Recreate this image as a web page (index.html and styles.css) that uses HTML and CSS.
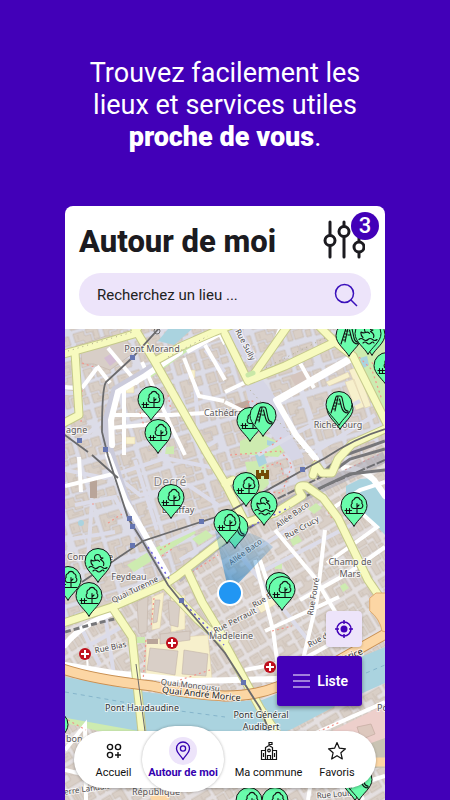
FILE: index.html
```html
<!DOCTYPE html>
<html lang="fr">
<head>
    <meta charset="UTF-8">
    <meta name="viewport" content="width=device-width, initial-scale=1.0">
    <title>Autour de moi</title>
    <link rel="stylesheet" href="styles.css">
</head>
<body>

    <p class="headline">Trouvez facilement les<br>lieux et services utiles<br><strong>proche de vous</strong>.</p>

    <main class="phone">
        <header class="top">
            <div class="title-row">
                <h1>Autour de moi</h1>
                <button type="button" class="filters" aria-label="Filtres, 3 actifs">
                    <svg width="42" height="40" viewBox="0 0 42 40" fill="none" stroke="#1c1b20" stroke-width="3" stroke-linecap="round">
                        <path d="M7 2v13M7 26v11M21 2v4M21 17v20M36 18v3M36 33v4"/>
                        <circle cx="7" cy="20.500" r="5"/>
                        <circle cx="21" cy="11.500" r="5"/>
                        <circle cx="36" cy="27" r="5"/>
                    </svg>
                    <span class="badge">3</span>
                </button>
            </div>
            <form class="search">
                <input type="text" id="lieu" aria-label="Recherchez un lieu" placeholder="Recherchez un lieu ...">
                <button type="submit" aria-label="Rechercher">
                    <svg width="24" height="24" viewBox="0 0 24 24" fill="none" stroke="#3a10bb" stroke-width="1.500">
                        <circle cx="10.500" cy="10.500" r="9"/>
                        <path d="M17 17l6 6"/>
                    </svg>
                </button>
            </form>
        </header>

        <section class="map">
            <svg class="map-canvas" viewBox="65 329 320 471" preserveAspectRatio="xMidYMin slice" role="img" aria-label="Carte">
                <defs>
                    <pattern id="blocks" width="58" height="52" patternUnits="userSpaceOnUse" patternTransform="rotate(-17)">
                        <rect width="58" height="52" fill="#dcdce7"/>
                        <g fill="#d9cfc7" stroke="#c2b3a8" stroke-width=".6">
                            <path d="M2 2h8v5h7v8H9v4H2zM11 2h13v9h-6V6h-7zM2 21h9v-4h8v8H2z"/>
                            <path d="M29 2h9v10h-9zM40 2h14v6h-5v6h-9zM29 14h9v11h-9zM41 16h5v-5h9v14H41z"/>
                            <path d="M2 30h12v6H7v11H2zM16 30h9v9h-7v8h-9v-9h7zM21 41h5v7h-5z"/>
                            <path d="M30 29h11v5h6v8h-8v-4h-9zM43 28h12v12h-6v-8h-6zM30 40h7v4h9v5H30zM48 43h7v6h-7z"/>
                        </g>
                        <path d="M5 7v8M13 12h5M32 5v4M46 5h5M34 18v4M45 20h7M5 33h5M19 33h3M34 31v5M50 31v6M34 46h8M20 17v6" fill="none" stroke="#c9bcb2" stroke-width=".8"/>
                    </pattern>
                    <pattern id="blocks-south" width="50" height="46" patternUnits="userSpaceOnUse" patternTransform="rotate(-31)">
                        <rect width="50" height="46" fill="#e4dfe0"/>
                        <g fill="#d9cfc7" stroke="#c2b3a8" stroke-width=".6">
                            <path d="M2 2h19v6h-7v5h7v8H2v-6h7V8H2z"/>
                            <path d="M25 2h10v9h-10zM37 2h11v14h-5V8h-6zM25 13h8v8h-8zM35 12h6v9h-6zM43 18h5v4h-5z"/>
                            <path d="M2 26h6v16H2zM10 26h12v6h-6v4h6v7H10z"/>
                            <path d="M26 26h13v5h-7v12h-6zM41 26h7v17h-7zM34 34h5v9h-5z"/>
                        </g>
                        <path d="M5 4v3M12 4v8M28 5h5M5 29v9M13 39h6M44 29v10" fill="none" stroke="#c9bcb2" stroke-width=".8"/>
                    </pattern>
                    <linearGradient id="beam" x1="229" y1="593" x2="246" y2="530" gradientUnits="userSpaceOnUse">
                        <stop offset="0" stop-color="#2f87c9" stop-opacity=".75"/>
                        <stop offset="1" stop-color="#2f87c9" stop-opacity=".15"/>
                    </linearGradient>

                    <path id="drop" d="M0 20.500C-3 14-13 8-13-.5a13 13 0 0 1 26 0C13 8 3 14 0 20.500z" fill="#69fdac" stroke="#111" stroke-width="1"/>
                    <g id="tree">
                        <use href="#drop"/>
                        <g fill="none" stroke="#111" stroke-width="1.100" stroke-linecap="round" stroke-linejoin="round">
                            <path d="M2 2.500H-.5a3 3 0 0 1-1.300-5.200A3 3 0 0 1 0-6.500a3.200 3.200 0 0 1 6 0 3 3 0 0 1 1.800 3.800A3 3 0 0 1 6.500 2.500H4M3 7.500V-2.500M3 1l2-2"/>
                            <path d="M-8 7.500H9M-9 4.500h6.500M-7.500 2.500v4M-4.500 2.500v4"/>
                        </g>
                    </g>
                    <g id="slide">
                        <use href="#drop"/>
                        <path d="M-8 8L-3-8q1-2 2 0L-4 6M-3.500-5h2.500M-4.500-2h2.500M-5.500 1h2.500M-6.500 4h2.500M-2-9h3q2 0 2.500 4l1.500 7q1 4 4 4v2q-5 0-6.500-6L.5-6M-1-1l2 0" fill="none" stroke="#111" stroke-width="1.100" stroke-linecap="round" stroke-linejoin="round"/>
                    </g>
                    <g id="duck">
                        <use href="#drop"/>
                        <path d="M-5 3.500q-2.500-2-2-5.500 2 1.500 4.500.5-1-1.500-1-3a3 3 0 0 1 6 0l2.500.5-2.500 1.500Q7 0 5.500 3.500M-2.500-1.500q3-1 4 1M-9 5.500q2-2 4.500 0t4.500 0 4.500 0 4.500 0M-5 9q2-2 4 0t4 0 3 0" fill="none" stroke="#111" stroke-width="1.100" stroke-linecap="round" stroke-linejoin="round"/>
                    </g>
                    <g id="hospital">
                        <circle r="6" fill="#bf0f1c"/>
                        <path d="M-4 0h8M0-4v8" stroke="#fff" stroke-width="2"/>
                    </g>
                </defs>

                <!-- ground and buildings -->
                <rect x="65" y="329" width="320" height="471" fill="url(#blocks)"/>
                <path d="M65 622L112 607 165 580 245 525 308 488 385 440V800H65z" fill="url(#blocks-south)"/>
                <path d="M80 345l26-9 20 0 6 18-22 16-16-6-12 0z" fill="#d8cec7" stroke="#c2b3a8" stroke-width=".6"/>
                <path d="M104 358l8-5 6 7-8 6z" fill="#d3bdd2"/>
                <path d="M233 405l18-6 12 8-8 8-22-2z" fill="#bfa99e"/>
                <path d="M90 480h7v18h-7z" fill="#b9a599"/>
                <path d="M290 376l16-7 10 14-17 9z" fill="#d5c5be"/>
                <g fill="#f7f0cc" stroke="#dccdaa" stroke-width=".5">
                    <path d="M345 382l9-3 10 28-8 3zM326 382l22-10 2 5-21 9zM349 370l8-3 14 39-6 2z"/>
                    <path d="M126 386h8v7h-8zM126 437h9v7h-9zM189 370h6v8h-6z"/>
                    <path d="M152 597l12-5-4 36-8 2zM171 597l14-2 0 34-14 3zM146 640l62-5 4 44-66-2zM256 605l16-8 4 7-15 9z"/>
                </g>
                <g fill="#d9cfc7" stroke="#c2b3a8" stroke-width=".6">
                    <path d="M168 600l12 3-2 24-8-2zM155 600l5 0-3 22-4 1zM150 648l28 3-3 24-28-5zM184 650l24 4-2 22-24-2z"/>
                    <path d="M137 602l11-6-1 36-8 2zM160 634l30-3 0 9-30 4z"/>
                </g>
                <path d="M147 639h11v5h-11z" fill="#b9a599"/>

                <!-- parks -->
                <g fill="#cdebb0">
                    <path d="M352 330h33v85l-8-8-21-46z"/>
                    <path d="M145 372l42-28 5 4-43 31zM240 441l20-8 28 14-10 10-38-3z"/>
                    <path d="M245 462l20-2 4 24-10 10-9-10zM127 565l26-16 40-20 3 4-40 25-22 14z"/>
                    <path d="M192 539l14-9 7 6-14 9zM308 509l8-6 6 5-8 6zM290 540l8-5 4 6-9 5zM160 448l14-2 0 8-12 0z"/>
                    <path d="M275 562h7v7h-7zM137 637h8v6h-8zM340 586l5-3 4 5-6 4z"/>
                    <path d="M65 717l75 11 5 6-30 1-50-12z"/>
                </g>
                <path d="M245 387l13-14 20 28 8 26 18 30-12 4-22-28-18-18z" fill="#d6d6e6"/>
                <path d="M225 329h17l16 30-9 8z" fill="#d6d6e6"/>
                <path d="M318 738l60-30 7 2v55h-35z" fill="#edcfcb"/>
                <path d="M330 745l16-8 3 8 12-6-4-12 14-3 4 10-10 4 5 10-12 5-4-6-10 6 3 5-12 3z" fill="#ddc8be" stroke="#c4aaa0" stroke-width=".7"/>
                <path d="M352 750l33-12v30h-30z" fill="#c9c3b3"/>

                <!-- water -->
                <g fill="#aad3df">
                    <path d="M65 677l80 15 80 10 37-2 15-6 55-25 53-22v36l-40 18-53 28-30 12-60 1-80-14-77-14z"/>
                    <path d="M158 341l10-12h24l-18 16z"/>
                    <path d="M346 486l14-7 14-1 11 14v43l-19-20-20-16z"/>
                    <path d="M360 358l7-2 2 9-7 4zM255 455l9-1 3 9-8 4zM267 440l8 2-1 5-7-2z"/>
                    <circle cx="81" cy="523" r="3"/>
                </g>
                <path d="M65 692l75 13M150 707l75 10M366 673l19-8" fill="none" stroke="#85b5cb" stroke-dasharray="4 4"/>

                <!-- small streets -->
                <g fill="none" stroke="#dcdce9" stroke-width="4">
                    <path d="M65 470l40 8 60-20 50 10M75 505l40-8 20 40M65 540l50-8M115 475l25 20 48-10 30 20M160 545l60-28M180 560l50-30M65 393h10M80 440l22-18M135 460l22 70M92 500l-4 60"/>
                    <path d="M171 390l-8 65M195 385l3 40M205 350l20 22M258 455l42-24 60-30M310 455l65-40M300 385l12 34M265 570l90-47M240 555l72 90M295 525l-35 22M200 450l18-10"/>
                    <path d="M105 615l9 60M125 625l-35 20M80 625l20 40"/>
                </g>
                <g fill="none" stroke="#fff" stroke-width="4">
                    <path d="M65 387l10 1M97 366l13 17M82 388l15-20M110 415h60l52-3M124 382v73M142 362l28 62 15 31M110 428l56-5M184 358l15 38 25 5M187 352l33-18 5 10M205 345l20 35M108 348l30 36"/>
                    <path d="M280 329l-10 25-18 19M300 363l14 25M276 399l74-42M225 392l25-12M225 402l20 10M65 486l48-12M79 457l2 35"/>
                    <path d="M275 530l40 48 25 42M300 600l50-28 35-25M325 530l-8 70-14 60M255 560l18 70 8 60M270 590l-10-30M265 631l74-34M245 670l60-12 55-30M330 510l30-20 25-8M357 509l20 18-50 36"/>
                    <path d="M65 750l20-25 1 75M65 770l85 20M300 740l85-38M318 738l-10 62M340 790l45-14M345 760l18 40"/>
                    <path d="M87 655l1 20" stroke-width="2"/>
                </g>
                <g fill="none" stroke-linecap="round">
                    <path d="M178 352l-35 22-27 16-9 30-1 20 12 38 16 45 34 55" stroke="#cbcbdb" stroke-width="9"/>
                    <path d="M180 352l-35 24-27 16-7 28 1 25" stroke="#fff" stroke-width="6"/>
                    <path d="M108 455l17 45 22 38 20 36" stroke="#fff" stroke-width="6"/>
                    <path d="M276 400l20 35 20 24M65 645q15-20 52-34M65 665l48 8 80 8 84-2" stroke="#fff" stroke-width="6"/>
                    <path d="M344 468q18 0 30 12l11 16M280 400l70-40" stroke="#fff" stroke-width="6"/>
                </g>
                <g fill="none" stroke="#f2958c" stroke-width="1.200" stroke-dasharray="2 3">
                    <path d="M82 363l12 4M82 390l-1 35M140 412l4 14M168 395l3 15M108 523l14-9M92 504h5M238 420l12-20 12 6M230 455l50-4 12 14-10 28-24-2M262 468l18-6 4 16M352 350l20 20 10 30M385 380l-15-20"/>
                    <path d="M160 550l12-8M162 556l10-7M188 575l30-20M272 445l10-8M315 460l-5 12M345 470l35-16M272 631l20-5M300 740l40-18M68 720l18 10M146 640l-3 42M154 598l-3 30M180 680l30-10M328 512l5 8M236 480l6 22"/>
                </g>

                <!-- railways -->
                <g fill="none">
                    <path d="M385 457l-60 28-67 33-33 20-48 40" stroke="#a6a6b4" stroke-width="11" opacity=".55"/>
                    <path d="M385 460l-60 26-67 36-48 32M325 475l-60 30" stroke="#6e6e72" stroke-width="2" stroke-dasharray="9 2"/>
                    <path d="M385 441l-45 16-22 20M385 449l-35 10-25 18M385 470l-35 4-32 15" stroke="#77777a" stroke-width="3"/>
                    <path d="M65 632l25-7 28-7" stroke="#77777a" stroke-width="3" stroke-dasharray="6 3"/>
                </g>

                <!-- main roads -->
                <g fill="none" stroke-linejoin="round" stroke-linecap="round">
                    <path d="M60 355l40-11 34-10 6-10M75 352l4 63-19 10M135 329l20 33 53 93 17 28 20 39M155 361l27-15 32-14 20-8M225 334l23 47M250 380l35-14 50-24M287 327l-35 50M318 325l17 17 18 14 34 68M385 429l-33 15-14 15-6 14-10 0-6-8-3 10M60 624l52-17 53-23 12-8 68-53 30-10 27-17q-8-12 4-10l17 12 15 20 30 62 22 32M112 607l20 30 10 95M165 585l33 35 27 24 35 64 20 30M188 572l14 30 23 38M225 484l8-4" stroke="#c5c98b" stroke-width="9"/>
                    <path d="M60 355l40-11 34-10 6-10M75 352l4 63-19 10M135 329l20 33 53 93 17 28 20 39M155 361l27-15 32-14 20-8M225 334l23 47M250 380l35-14 50-24M287 327l-35 50M318 325l17 17 18 14 34 68M385 429l-33 15-14 15-6 14-10 0-6-8-3 10M60 624l52-17 53-23 12-8 68-53 30-10 27-17q-8-12 4-10l17 12 15 20 30 62 22 32M112 607l20 30 10 95M165 585l33 35 27 24 35 64 20 30M188 572l14 30 23 38M225 484l8-4" stroke="#f7fabf" stroke-width="7"/>
                    <path d="M60 668q30 11 92 18 40 9 73 10 30 0 52-9l50-20 62-35" stroke="#c98f50" stroke-width="11"/>
                    <path d="M60 668q30 11 92 18 40 9 73 10 30 0 52-9l50-20 62-35" stroke="#fcd6a4" stroke-width="9"/>
                    <path d="M370 598l6-5h14v40l-8-2q-2-12-12-20z" fill="#fcd6a4" stroke="#e0ac70" stroke-width="1"/>
                    <path d="M375 762h12M155 797h10" stroke="#fcd6a4" stroke-width="9"/>
                    <path d="M248 375l5-2" stroke="#c9e8a7" stroke-width="5"/>
                </g>
                <path d="M68 351l30-9 35-10M168 357l40-21M250 390l60 66M325 338l-60 30" fill="none" stroke="#aaa68a" stroke-width="1" stroke-dasharray="1 4"/>

                <!-- tram -->
                <g fill="none" stroke="#6a6a6c" stroke-width="1.800">
                    <path d="M162 325l-30 33-26 24q-4 6-4 50l6 24 20 62 15 24 25 43 12 15 45 53 35 55 12 30"/>
                    <path d="M82 582l61-41 82-27 78-44 22-12q30-20 60-29M62 433l26 19M92 455l26 23"/>
                    <path d="M136 664l10 75" stroke-width="1"/>
                </g>
                <circle cx="157" cy="331" r="3" fill="none" stroke="#6a6a6c"/>
                <g fill="#6575b1">
                    <path d="M130 355h5v5h-5zM103 447h5v5h-5zM77 438h5v5h-5zM127 516h5v5h-5zM130 524h5v5h-5zM130 543h5v5h-5zM199 519h5v5h-5zM300 467h5v5h-5zM179 598h5v5h-5zM241 680h5v5h-5z"/>
                </g>
                <path d="M148 547l22 33M186 605l38 40M225 539l65-32" fill="none" stroke="#6a5ee0" stroke-width="1.500" stroke-dasharray="2 4"/>
                <path d="M256 470h3v3h2v-3h3v3h2v-3h3v9h-5v-3h-3v3h-5z" fill="#734a08"/>

                <!-- labels -->
                <g class="labels">
                    <text x="152" y="352">Pont Morand</text>
                    <text x="227" y="416">Cathédrale</text>
                    <text x="338" y="428">Richebourg</text>
                    <text x="170" y="486" class="district">Decré</text>
                    <text x="178" y="513">Bouffay</text>
                    <text x="66" y="433" class="start">agne</text>
                    <text x="67" y="560" class="start">Commerce</text>
                    <text x="129" y="580">Feydeau</text>
                    <text x="350" y="565">Champ de</text>
                    <text x="350" y="577">Mars</text>
                    <text x="231" y="639">Madeleine</text>
                    <text x="142" y="711" class="dark">Pont Haudaudine</text>
                    <text x="261" y="718" class="dark">Pont Général</text>
                    <text x="261" y="730" class="dark">Audibert</text>
                    <text x="66" y="742" class="start">bon</text>
                    <text x="156" y="795">République</text>
                    <text x="377" y="711" class="start">Pont</text>
                    <g class="street">
                        <text transform="translate(243 346) rotate(62)">Rue Sully</text>
                        <text transform="translate(294 517) rotate(-36)">Allée Baco</text>
                        <text transform="translate(303 530) rotate(-29)">Rue Crucy</text>
                        <text transform="translate(247 554) rotate(-36)">Allée Baco</text>
                        <text transform="translate(136 592) rotate(-26)">Quai Turenne</text>
                        <text transform="translate(111 650) rotate(-12)">Rue Bias</text>
                        <text transform="translate(190 688) rotate(7)">Quai Moncousu</text>
                        <text transform="translate(236 623) rotate(-27)">Rue Perrault</text>
                        <text transform="translate(273 597) rotate(-30)">Rue Brillant</text>
                        <text transform="translate(316 597) rotate(-80)">Rue Fouré</text>
                        <text transform="translate(331 636) rotate(-28)">Rue de Rieux</text>
                        <text transform="translate(84 792) rotate(-8)">Pierre Landais</text>
                        <text transform="translate(335 797) rotate(-5)">Rue Louis</text>
                        <text transform="translate(201 697) rotate(6)" class="quay">Quai André Morice</text>
                        <text transform="translate(350 659) rotate(-21)" class="quay">Morice</text>
                    </g>
                </g>

                <use href="#hospital" x="85" y="654"/>
                <use href="#hospital" x="172" y="643"/>
                <use href="#hospital" x="270" y="667"/>

                <!-- pins -->
                <use href="#tree" x="151" y="400"/>
                <use href="#tree" x="158" y="433"/>
                <use href="#tree" x="250" y="421"/>
                <use href="#slide" x="263" y="416"/>
                <use href="#drop" x="340" y="409"/>
                <use href="#slide" x="339" y="405"/>
                <use href="#drop" x="372" y="335"/>
                <use href="#slide" x="349" y="336"/>
                <use href="#duck" x="368" y="334"/>
                <use href="#tree" x="387" y="366"/>
                <use href="#tree" x="171" y="498"/>
                <use href="#tree" x="246" y="486"/>
                <use href="#duck" x="264" y="505"/>
                <use href="#tree" x="354" y="506"/>
                <use href="#slide" x="235" y="528"/>
                <path d="M229 593L215 531a64 64 0 0 1 58 16z" fill="url(#beam)"/>
                <use href="#tree" x="227" y="523"/>
                <use href="#drop" x="279" y="586"/>
                <use href="#tree" x="282" y="590"/>
                <use href="#tree" x="68" y="580"/>
                <use href="#duck" x="98" y="562"/>
                <use href="#tree" x="89" y="596"/>
                <use href="#drop" x="55" y="725"/>
                <use href="#tree" x="249" y="801"/>
                <use href="#tree" x="275" y="801"/>
                <use href="#duck" x="355" y="780"/>
                <use href="#slide" x="359" y="780"/>

                <circle cx="230" cy="593" r="13" fill="#fff"/>
                <circle cx="230" cy="593" r="11" fill="#2196f3"/>
            </svg>

            <div class="map-actions">
                <button type="button" class="locate" aria-label="Me localiser">
                    <svg width="20" height="20" viewBox="0 0 20 20" fill="none" stroke="#4200b8" stroke-width="1.500">
                        <circle cx="10" cy="10" r="7"/>
                        <circle cx="10" cy="10" r="3.500" fill="#4200b8" stroke="none"/>
                        <path d="M10 1v4M10 15v4M1 10h4M15 10h4"/>
                    </svg>
                </button>
                <button type="button" class="list">
                    <svg width="17" height="14" viewBox="0 0 17 14" stroke="#fff" stroke-width="1.200">
                        <path d="M0 1h17M0 7h17M0 13h17"/>
                    </svg>
                    Liste
                </button>
            </div>

            <nav class="tabs">
                <a href="#accueil">
                    <span class="icon">
                        <svg width="16" height="16" viewBox="0 0 16 16" fill="none" stroke="#111" stroke-width="1.400">
                            <circle cx="4" cy="4" r="2.600"/>
                            <circle cx="12" cy="4" r="2.600"/>
                            <circle cx="4" cy="12" r="2.600"/>
                            <path d="M12 9v6M9 12h6"/>
                        </svg>
                    </span>
                    Accueil
                </a>
                <a href="#autour" class="active">
                    <span class="icon">
                        <svg width="16" height="20" viewBox="0 0 16 20" fill="none" stroke="#3500b0" stroke-width="1.300" stroke-linejoin="round">
                            <path d="M8 18.500C6.500 15 1.500 12 1.500 7.500a6.500 6.500 0 0 1 13 0C14.500 12 9.500 15 8 18.500z"/>
                            <circle cx="8" cy="7.500" r="2.600"/>
                        </svg>
                    </span>
                    Autour de moi
                </a>
                <a href="#commune">
                    <span class="icon">
                        <svg width="18" height="20" viewBox="0 0 18 20" fill="none" stroke="#111" stroke-width="1.200">
                            <path d="M5.500 18.500v-12L9 4.500l3.500 2v12M5.500 9.500H1.500v9h15v-9h-4M9 4.500v-3h3v2H9M7.500 18.500v-4h3v4M3.500 12v4M14.500 12v4"/>
                            <circle cx="9" cy="9.500" r="1.300"/>
                        </svg>
                    </span>
                    Ma commune
                </a>
                <a href="#favoris">
                    <span class="icon">
                        <svg width="20" height="20" viewBox="0 0 20 20" fill="none" stroke="#111" stroke-width="1.200" stroke-linejoin="round">
                            <path d="M10 1.500l2.400 5.700 6.100.6-4.600 4 1.400 6.200-5.300-3.300L4.700 18l1.400-6.200-4.600-4 6.100-.6z"/>
                        </svg>
                    </span>
                    Favoris
                </a>
            </nav>
        </section>
    </main>

</body>
</html>
```

FILE: styles.css
```css
* {
    box-sizing: border-box;
}
body {
    margin: 0;
    min-height: 100vh;
    display: flex;
    flex-direction: column;
    align-items: center;
    background-color: #4200b8;
    font-family: Roboto, "Liberation Sans", sans-serif;
}
button {
    padding: 0;
    border: none;
    background: none;
    font-family: inherit;
    cursor: pointer;
}
svg {
    display: block;
}
.headline {
    margin: 57px 0 53px;
    color: #fff;
    font-size: 27px;
    line-height: 32px;
    text-align: center;
}
.headline strong {
    font-weight: 900;
}
.phone {
    flex: 1;
    display: flex;
    flex-direction: column;
    width: calc(100% - 130px);
    max-width: 480px;
    background: white;
    border-radius: 8px 8px 0 0;
}
.top {
    padding: 14px 14px 13px;
}
.title-row {
    display: flex;
    justify-content: space-between;
    align-items: center;
    margin-bottom: 13px;
}
h1 {
    margin: 0;
    padding-top: 4px;
    color: #1c1b20;
    font-size: 31px;
    font-weight: 800;
    line-height: 36px;
}
.filters {
    position: relative;
    margin-right: 6px;
}
.badge {
    position: absolute;
    top: -8px;
    right: -14px;
    width: 28px;
    border-radius: 14px;
    background: #4200b8;
    color: white;
    font-size: 22px;
    font-weight: 500;
    line-height: 28px;
}
.search {
    display: flex;
    align-items: center;
    height: 43px;
    padding: 0 13px 0 18px;
    border-radius: 22px;
    background: #ede4fa;
}
.search input {
    flex: 1;
    min-width: 0;
    padding: 0;
    border: none;
    background: none;
    font-family: inherit;
    font-size: 15px;
}
.search input::placeholder {
    color: #222;
}
.map {
    position: relative;
    flex: 1;
    display: flex;
    overflow: hidden;
    background: #dcdce7;
}
.map-canvas {
    flex: 1;
    width: 100%;
}
.labels {
    fill: #5b5759;
    stroke: #fff;
    stroke-opacity: 0.7;
    stroke-width: 2px;
    paint-order: stroke;
    font-family: "Noto Sans", sans-serif;
    font-size: 9px;
    text-anchor: middle;
}
.labels .start {
    text-anchor: start;
}
.labels .dark {
    fill: #333;
}
.labels .district {
    fill: #8a8789;
    font-size: 12px;
}
.street {
    fill: #4d4a4b;
    font-size: 8px;
}
.street .quay {
    fill: #222;
    font-size: 9px;
}
.map-actions {
    position: absolute;
    right: 23px;
    bottom: 94px;
    display: flex;
    flex-direction: column;
    align-items: flex-end;
    gap: 9px;
}
.locate {
    padding: 8px;
    border-radius: 4px;
    background: #ede4fa;
    box-shadow: 0 1px 3px rgba(0, 0, 0, 0.2);
}
.list {
    display: flex;
    align-items: center;
    gap: 7px;
    height: 50px;
    padding: 0 14px 0 16px;
    border-radius: 3px;
    background: #4200b8;
    color: white;
    font-size: 14px;
    font-weight: 600;
    box-shadow: 0 2px 4px rgba(0, 0, 0, 0.4);
}
.tabs {
    position: absolute;
    left: 9px;
    right: 9px;
    bottom: 12px;
    display: grid;
    grid-template-columns: 57fr 82fr 89fr 48fr;
    align-items: center;
    padding: 6px 15px 7px 11px;
    border-radius: 29px;
    background: white;
    box-shadow: 0 1px 3px rgba(0, 0, 0, 0.3);
}
.tabs a {
    display: flex;
    flex-direction: column;
    align-items: center;
    color: #111;
    font-size: 11px;
    line-height: 16px;
    text-decoration: none;
    white-space: nowrap;
}
.icon {
    display: flex;
    justify-content: center;
    align-items: center;
    width: 28px;
    height: 28px;
    border-radius: 50%;
}
/* the bubble sticks out above and below the bar */
.tabs .active {
    margin: -11px 0;
    padding: 11px 0;
    border-radius: 34px;
    background: white;
    box-shadow: 0 0 3px rgba(0, 0, 0, 0.3);
    color: #3500b0;
    font-weight: 700;
}
.active .icon {
    background: #ede4fa;
}
```
